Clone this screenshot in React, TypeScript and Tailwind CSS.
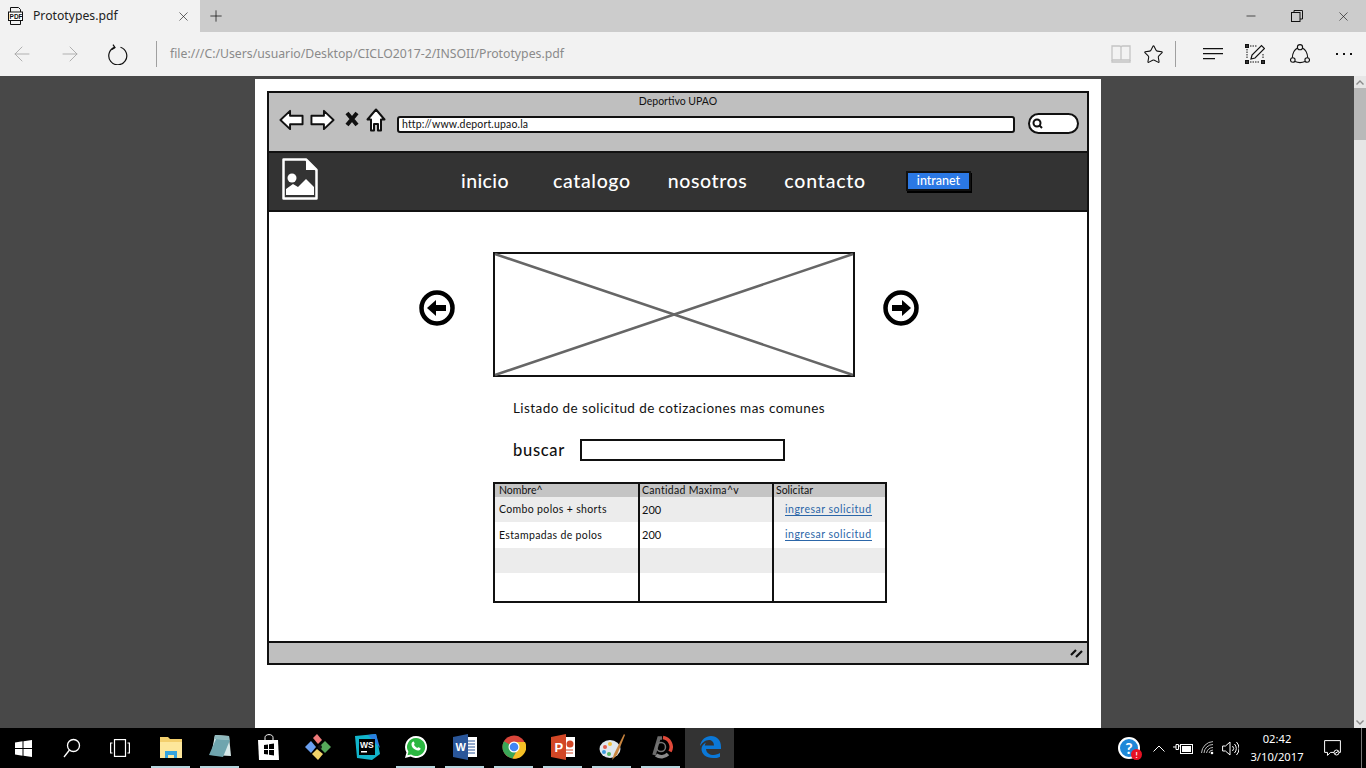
import { ArrowLeft, ArrowRight, X, Plus, Minus, Star } from 'lucide-react';
import type { ReactNode } from 'react';

const sketch = { fontFamily: 'Lato, "Liberation Sans", sans-serif' };
const ui = { fontFamily: '"Noto Sans", "Open Sans", sans-serif' };

function RestoreIcon() {
  return (
    <svg width="12" height="12" viewBox="0 0 12 12" fill="none" stroke="#111" strokeWidth="1">
      <rect x="0.5" y="2.5" width="8.5" height="9" />
      <path d="M3 2.5V.5h8.5V9H9" />
    </svg>
  );
}

function RefreshIcon() {
  return (
    <svg width="20" height="21" viewBox="0 0 20 21" fill="none" stroke="#111" strokeWidth="1.2">
      <path d="M12.5 3.2a9 9 0 1 1-6 .2" />
      <path d="M5 .6l2 3-3 2" />
    </svg>
  );
}

function ReadingIcon() {
  return (
    <svg width="20" height="18" viewBox="0 0 20 18" fill="none" stroke="#c4c4c4" strokeWidth="1.3">
      <path d="M1 1h7.5c.8 0 1.5.6 1.5 1.5V15H1zM19 1h-7.5c-.8 0-1.5.6-1.5 1.5V15h9z" />
      <path d="M1 15v2h18v-2" />
    </svg>
  );
}

function HubIcon() {
  return (
    <svg width="21" height="12" viewBox="0 0 21 12" fill="none" stroke="#111" strokeWidth="1.2">
      <path d="M0 .6h20M0 5.6h20M0 10.6h12" />
    </svg>
  );
}

function NoteIcon() {
  return (
    <svg width="20" height="20" viewBox="0 0 20 20" fill="none" stroke="#111">
      <rect x="0.5" y="0.5" width="3" height="3" fill="#333" />
      <rect x="0.5" y="16.5" width="3" height="3" fill="#333" />
      <rect x="16.5" y="16.5" width="3" height="3" fill="#333" />
      <path d="M5 2h7M2 5v10M5 18h10M18 10v5" strokeDasharray="1.5 1" />
      <path d="M6 15l1-4L16.5 1.5l3 3L10 14z" strokeWidth="1.2" />
    </svg>
  );
}

function ShareIcon() {
  return (
    <svg width="20" height="20" viewBox="0 0 20 20" fill="none" stroke="#111" strokeWidth="1.1">
      <circle cx="10" cy="3.2" r="2.6" />
      <circle cx="2.8" cy="16" r="2.3" />
      <circle cx="17.2" cy="16" r="2.3" />
      <path d="M7.6 4C4.5 5.5 2.6 9 2.3 13.7M12.4 4c3.1 1.5 5 5 5.3 9.7M5 17.5c3 1.3 7 1.3 10 0" />
    </svg>
  );
}

function PdfIcon() {
  return (
    <svg width="15" height="18" viewBox="0 0 15 18" fill="none" stroke="#111">
      <path d="M2.5 5V.5h8l2 2V5M2.5 14v3.5h10V14" />
      <rect x="0.5" y="5" width="14" height="8.5" fill="#fff" />
      <text x="1.6" y="11.8" fontSize="6.5" fontWeight="700" fill="#111" stroke="none" fontFamily="Liberation Sans">PDF</text>
    </svg>
  );
}

function BlockArrow({ dir }: { dir: 'left' | 'right' }) {
  return (
    <svg width="25" height="22" viewBox="0 0 26 22" fill="#fff" stroke="#111" strokeWidth="2" className="block">
      {dir === 'left' ? (
        <path d="M1.5 11L11.5 1.5V6.5H24.5V15.5H11.5V20.5Z" strokeLinejoin="round" />
      ) : (
        <path d="M24.5 11L14.5 1.5V6.5H1.5V15.5H14.5V20.5Z" strokeLinejoin="round" />
      )}
    </svg>
  );
}

function SketchHome() {
  return (
    <svg width="20" height="24" viewBox="0 0 20 24" fill="#fff" stroke="#111" strokeWidth="2" className="block">
      <path d="M10 1.5L1.5 11.5H5V22.5H8V16H12V22.5H15V11.5H18.5Z" strokeLinejoin="round" />
    </svg>
  );
}

function SketchX() {
  return (
    <svg width="14" height="16" viewBox="0 0 14 16" stroke="#111" strokeWidth="4" fill="none" className="block">
      <path d="M2 2l10 12M12 2L2 14" />
    </svg>
  );
}

function SketchLens() {
  return (
    <svg width="11" height="11" viewBox="0 0 11 11" fill="none" stroke="#111" strokeWidth="2">
      <circle cx="5" cy="5" r="3.5" />
      <path d="M7.5 7.5L10 10" />
    </svg>
  );
}

function ImageLogo() {
  return (
    <svg width="36" height="42" viewBox="0 0 36 42" fill="none">
      <path d="M1.5 1.5H24L34.5 12V40.5H1.5Z" stroke="#fff" strokeWidth="2.5" strokeLinejoin="round" />
      <path d="M24 2V12H34Z" fill="#fff" />
      <circle cx="10" cy="20" r="4.5" fill="#fff" />
      <path d="M4 37V31L11 26L16 29L24 21L32 29V37Z" fill="#fff" />
    </svg>
  );
}

function CircleArrow({ dir }: { dir: 'left' | 'right' }) {
  return (
    <svg width="36" height="36" viewBox="0 0 36 36" fill="none" className="block">
      <circle cx="18" cy="18" r="15.5" stroke="#000" strokeWidth="4.5" />
      {dir === 'left' ? (
        <path d="M8 18L17 10V15H27V21H17V26Z" fill="#000" />
      ) : (
        <path d="M28 18L19 10V15H9V21H19V26Z" fill="#000" />
      )}
    </svg>
  );
}

function Placeholder() {
  return (
    <svg width="362" height="125" viewBox="0 0 362 125" className="block">
      <rect x="1" y="1" width="360" height="123" fill="#fff" stroke="#111" strokeWidth="2" />
      <path d="M2 2L360 123M360 2L2 123" stroke="#666" strokeWidth="2.5" />
    </svg>
  );
}

function WinLogo() {
  return (
    <svg width="17" height="17" viewBox="0 0 17 17" fill="#fff">
      <path d="M0 2.5L7.5 1.3V8H0zM8.5 1.2L17 0V8H8.5zM0 9H7.5V15.7L0 14.5zM8.5 9H17V17L8.5 15.8z" />
    </svg>
  );
}

function SearchTask() {
  return (
    <svg width="18" height="20" viewBox="0 0 18 20" fill="none" stroke="#fff" strokeWidth="1.3">
      <circle cx="10.5" cy="7.5" r="6" />
      <path d="M6.5 12L1 19" />
    </svg>
  );
}

function TaskView() {
  return (
    <svg width="20" height="18" viewBox="0 0 20 18" fill="none" stroke="#fff" strokeWidth="1.2">
      <rect x="4.5" y="0.6" width="11" height="16.8" />
      <path d="M2.5 4H.6v10h1.9M17.5 4h1.9v10h-1.9" />
    </svg>
  );
}

function Explorer() {
  return (
    <svg width="22" height="22" viewBox="0 0 22 22">
      <path d="M0 1h8l2 2h12v19H0z" fill="#f3cf6d" />
      <path d="M0 6h22v16H0z" fill="#fde79b" />
      <path d="M5 22v-7h12v7h-3v-3H8v3z" fill="#35a4de" />
    </svg>
  );
}

function Notepad() {
  return (
    <svg width="24" height="26" viewBox="0 0 24 26">
      <path d="M7 1L21 2L23 22L3 21Z" fill="#d6e8e8" />
      <path d="M7 1L21 2L21.5 6L6 5Z" fill="#8fb9bd" />
      <path d="M1 21L8 5L22 6L15 23Z" fill="#6fa5ae" />
    </svg>
  );
}

function Store() {
  return (
    <svg width="22" height="27" viewBox="0 0 22 27">
      <path d="M7 6V3.5C7 1.5 9 .6 11 .6s4 .9 4 2.9V6" fill="none" stroke="#fff" />
      <path d="M0 6h20l1 20H1z" fill="#fff" />
      <path d="M6 11l4-.6V15H6zM11 10.3l5-.7V15h-5zM6 16h4v4.5l-4-.6zM11 16h5v5.4l-5-.7z" fill="#000" />
    </svg>
  );
}

function Kraken() {
  return (
    <svg width="26" height="28" viewBox="0 0 26 28">
      <path d="M8 5L12 1L17 7L13 11Z" fill="#ef7a7a" />
      <path d="M0 14L6 8L11 14L6 20Z" fill="#6a9ff0" />
      <path d="M14 14L20 8L26 14L20 20Z" fill="#56a85a" />
      <path d="M7 21L12 16L18 21L13 27Z" fill="#f1d36a" />
      <circle cx="15" cy="14" r="2" fill="#111" />
    </svg>
  );
}

function WebStorm() {
  return (
    <svg width="26" height="26" viewBox="0 0 26 26">
      <path d="M1 2L22 0L26 20L18 26L3 24Z" fill="#12b5cb" />
      <path d="M14 1L22 0L26 14Z" fill="#2a7fe0" />
      <rect x="5" y="5" width="16" height="16" fill="#000" />
      <text x="6" y="14" fill="#fff" fontSize="8.5" fontWeight="700" fontFamily="Liberation Sans">WS</text>
      <rect x="7" y="17" width="6" height="1.5" fill="#fff" />
    </svg>
  );
}

function WhatsApp() {
  return (
    <svg width="24" height="24" viewBox="0 0 24 24">
      <path d="M12 1a11 11 0 0 0-9.5 16.5L1 23l5.7-1.4A11 11 0 1 0 12 1z" fill="#fff" />
      <path d="M12 3a9 9 0 0 0-7.600 13.800l-.9 3.500 3.600-.9A9 9 0 1 0 12 3z" fill="#2bb741" />
      <path d="M8.500 7c1-1 1.500-.5 2 1 .3.800 0 1-.5 1.800.6 1.300 1.700 2.400 3.200 3.200.8-.6 1.100-1 1.900-.6 1.500.7 2 1 1.200 2-1 1.400-3 1.300-5.300 0C8 13 6.300 9 8.500 7z" fill="#fff" />
    </svg>
  );
}

function Word() {
  return (
    <svg width="24" height="26" viewBox="0 0 24 26">
      <path d="M14 3h10v20H14z" fill="#fff" />
      <path d="M15 7h7M15 10h7M15 13h7M15 16h7M15 19h7" stroke="#2a5699" />
      <path d="M0 3L15 0V26L0 23Z" fill="#2a5699" />
      <text x="2.5" y="17" fill="#fff" fontSize="11" fontWeight="700" fontFamily="Liberation Sans">W</text>
    </svg>
  );
}

function Chrome() {
  return (
    <svg width="24" height="24" viewBox="0 0 24 24">
      <circle cx="12" cy="12" r="11.5" fill="#d9453a" />
      <path d="M12 12L2 6.2A11.5 11.5 0 0 0 10.5 23.4L17 12z" fill="#3aa757" />
      <path d="M12 7H23A11.5 11.5 0 0 1 10.5 23.4L17 12z" fill="#f6c026" />
      <circle cx="12" cy="12" r="5.5" fill="#fff" />
      <circle cx="12" cy="12" r="4.3" fill="#4285f4" />
    </svg>
  );
}

function PowerPoint() {
  return (
    <svg width="24" height="26" viewBox="0 0 24 26">
      <path d="M14 3h10v20H14z" fill="#fff" />
      <circle cx="19" cy="10" r="3.5" fill="#d24726" />
      <path d="M15 16h7M15 19h7" stroke="#d24726" />
      <path d="M0 3L15 0V26L0 23Z" fill="#d24726" />
      <text x="3.5" y="18" fill="#fff" fontSize="13" fontWeight="700" fontFamily="Liberation Sans">P</text>
    </svg>
  );
}

function Paint() {
  return (
    <svg width="26" height="28" viewBox="0 0 26 28">
      <ellipse cx="11" cy="16" rx="10.5" ry="9" fill="#dfe7ee" />
      <circle cx="6" cy="14" r="2" fill="#e25b4b" />
      <circle cx="11" cy="11" r="2" fill="#f3c13a" />
      <circle cx="5" cy="19" r="2" fill="#3d9be0" />
      <circle cx="10" cy="21" r="2" fill="#52b464" />
      <path d="M25 1L15 21L13 27L18 22L26 2Z" fill="#c9853f" />
    </svg>
  );
}

function Pinned() {
  return (
    <svg width="24" height="24" viewBox="0 0 24 24" fill="none">
      <path d="M14 2.5a9.5 9.5 0 0 1 7 14" stroke="#e0493a" strokeWidth="3.5" />
      <path d="M19 19a9.5 9.5 0 0 1-12 1" stroke="#8b8b8b" strokeWidth="3.5" />
      <path d="M5 20L10 3h3" stroke="#6b6b6b" strokeWidth="3.5" />
      <circle cx="12" cy="12" r="4.5" stroke="#777" strokeWidth="1.5" />
    </svg>
  );
}

function Edge() {
  return (
    <svg width="22" height="22" viewBox="0 0 22 22">
      <path d="M1 10C2 3.5 7 0 12 0c6 0 10 4 10 11v2H7c.4 4 3.8 6 7.5 6 2.5 0 4.8-.8 6.5-1.9v3.6C19 22 16.5 22 14 22 7 22 2.5 18 2.5 13c0-2.8 1.8-5 4.5-6.5-.7 1-1 2-1.200 3H15c0-3-1.800-5.500-5-5.500C6 4 3 7 1 10z" fill="#0b78d7" />
    </svg>
  );
}

function HelpBadge() {
  return (
    <span className="relative flex h-[22px] w-[22px] items-center justify-center rounded-full border-2 border-white bg-[#1e88d8] text-[16px] font-bold leading-none text-white" style={sketch}>
      ?
      <span className="absolute -bottom-[3px] -right-[4px] flex h-[11px] w-[11px] items-center justify-center rounded-full bg-[#e81123] text-[8px] font-bold text-white">!</span>
    </span>
  );
}

function Battery() {
  return (
    <svg width="20" height="14" viewBox="0 0 20 14" fill="none" stroke="#fff">
      <path d="M0 6h3M3 3.5h2.5v5H3zM5.5 5H7" />
      <rect x="7.5" y="3.5" width="12" height="9" />
      <rect x="9" y="5" width="9" height="6" fill="#fff" stroke="none" />
    </svg>
  );
}

function Wifi() {
  return (
    <svg width="14" height="14" viewBox="0 0 14 14" fill="none" stroke="#bbb">
      <path d="M.5 12A12 12 0 0 1 12 .6M3 12a9 9 0 0 1 9-8.5M5.5 12A6.5 6.5 0 0 1 12 6.5M8 12a4 4 0 0 1 4-3" />
      <circle cx="11" cy="12" r="1.3" fill="#fff" stroke="none" />
    </svg>
  );
}

function Speaker() {
  return (
    <svg width="17" height="15" viewBox="0 0 17 15" fill="none" stroke="#fff">
      <path d="M.6 5h2.9L8 1v13L3.5 10H.6z" />
      <path d="M10.5 5a3.5 3.5 0 0 1 0 5M12.5 3a6.5 6.5 0 0 1 0 9M14.5 1a9.5 9.5 0 0 1 0 13" />
    </svg>
  );
}

function Notif() {
  return (
    <svg width="17" height="16" viewBox="0 0 17 16" fill="none" stroke="#fff">
      <path d="M.6.6h15.8v11.8H6.5l-3 3v-3H.6z" />
      <circle cx="12.5" cy="12.5" r="2.5" fill="#000" />
      <path d="M11 13.5l3-2" />
    </svg>
  );
}

function AppSlot({ children, on, active }: { children: ReactNode; on?: boolean; active?: boolean }) {
  return (
    <div className={`flex h-10 w-[49px] flex-col ${active ? 'bg-[#333333]' : ''}`}>
      <div className="flex flex-1 items-center justify-center">{children}</div>
      <div className={`mx-[5px] h-[2px] ${on ? 'bg-[#b5d5dd]' : 'bg-transparent'}`} />
    </div>
  );
}

const rows = [
  { name: 'Combo polos + shorts', qty: '200', link: 'ingresar solicitud', bg: 'bg-[#ececec]', h: 'h-[25px]' },
  { name: 'Estampadas de polos', qty: '200', link: 'ingresar solicitud', bg: 'bg-white', h: 'h-[26px]' },
  { name: '', qty: '', link: '', bg: 'bg-[#ececec]', h: 'h-[25px]' },
  { name: '', qty: '', link: '', bg: 'bg-white', h: 'h-[28px]' },
];

export default function App() {
  return (
    <div className="flex h-[768px] w-[1366px] flex-col overflow-hidden bg-[#484848]" style={ui}>
      {/* tab strip */}
      <div className="flex h-8 shrink-0 items-center bg-[#cccccc]">
        <div className="flex h-8 w-[200px] items-center bg-[#f2f2f2] pl-2">
          <PdfIcon />
          <span className="ml-[10px] text-[12.2px] text-[#222]">Prototypes.pdf</span>
          <X size={15} strokeWidth={1} className="ml-auto mr-[9px] text-[#111]" />
        </div>
        <Plus size={18} strokeWidth={1} className="ml-[7px] text-[#111]" />
        <div className="ml-auto flex items-center">
          <div className="flex w-[46px] justify-center"><Minus size={14} strokeWidth={1.2} className="text-[#111]" /></div>
          <div className="flex w-[46px] justify-center"><RestoreIcon /></div>
          <div className="flex w-[46px] justify-center"><X size={15} strokeWidth={1} className="text-[#111]" /></div>
        </div>
      </div>

      {/* address bar */}
      <div className="flex h-11 shrink-0 items-center bg-[#f2f2f2]">
        <div className="-ml-[2px] flex w-12 justify-center"><ArrowLeft size={24} strokeWidth={0.9} className="text-[#a8a8a8]" /></div>
        <div className="flex w-12 justify-center"><ArrowRight size={24} strokeWidth={0.9} className="text-[#a8a8a8]" /></div>
        <div className="flex w-12 justify-center"><RefreshIcon /></div>
        <div className="ml-[14px] h-[26px] w-px bg-[#a0a0a0]" />
        <span className="ml-[13px] text-[12.25px] text-[#8a8a8a]">file:///C:/Users/usuario/Desktop/CICLO2017-2/INSOII/Prototypes.pdf</span>
        <div className="ml-auto flex items-center">
          <ReadingIcon />
          <Star size={21} strokeWidth={1.2} className="ml-[12px] text-[#111]" />
          <div className="ml-[11px] h-[26px] w-px bg-[#a0a0a0]" />
          <div className="ml-[27px]"><HubIcon /></div>
          <div className="ml-[21px]"><NoteIcon /></div>
          <div className="ml-[25px]"><ShareIcon /></div>
          <div className="ml-[26px] mr-[14px] flex gap-[5px]">
            <span className="h-[2px] w-[2px] bg-[#111]" />
            <span className="h-[2px] w-[2px] bg-[#111]" />
            <span className="h-[2px] w-[2px] bg-[#111]" />
          </div>
        </div>
      </div>

      {/* pdf viewer */}
      <div className="flex min-h-0 flex-1">
        <div className="ml-[255px] mt-[3px] w-[846px] bg-white px-3 pt-3">
          <div className="flex h-[574px] w-[822px] flex-col border-2 border-[#111]" style={sketch}>
            <div className="h-[58px] shrink-0 bg-[#bfbfbf]">
              <div className="pt-[1px] text-center text-[10.5px] leading-[14px] text-[#111]">Deportivo UPAO</div>
              <div className="mt-[1px] flex items-start pl-[10px]">
                <BlockArrow dir="left" />
                <div className="ml-[6px]"><BlockArrow dir="right" /></div>
                <div className="ml-[10px] mt-[2px]"><SketchX /></div>
                <div className="ml-[7px] -mt-[1px]"><SketchHome /></div>
                <div className="ml-[11px] mt-[7px] flex h-[17px] w-[618px] items-center rounded-[3px] border-2 border-[#111] bg-white pl-[3px] text-[10.5px] tracking-[0.15px] text-[#111]">
                  http://www.deport.upao.la
                </div>
                <div className="ml-[13px] mt-[4px] flex h-[21px] w-[51px] items-center rounded-full border-2 border-[#111] bg-white pl-[2px]">
                  <SketchLens />
                </div>
              </div>
            </div>
            <div className="flex h-[61px] shrink-0 items-center border-y-2 border-[#111] bg-[#333333] pb-[2px] pl-[13px]">
              <div className="mb-[3px]"><ImageLogo /></div>
              <span className="ml-[143px] text-[19.5px] font-medium tracking-[0.4px] text-white">inicio</span>
              <span className="ml-[44px] text-[19.5px] font-medium tracking-[0.65px] text-white">catalogo</span>
              <span className="ml-[37px] text-[19.5px] font-medium tracking-[0.6px] text-white">nosotros</span>
              <span className="ml-[37px] text-[19.5px] font-medium tracking-[0.8px] text-white">contacto</span>
              <span className="ml-[40px] mt-[1px] flex h-[20px] w-[65px] items-center justify-center border-2 border-[#111] bg-[#2b78e4] text-[12.5px] font-medium text-white shadow-[1px_2px_0_#000]">intranet</span>
            </div>

            <div className="flex min-h-0 flex-1 flex-col bg-white pt-[40px]">
              <div className="flex items-start pl-[150px]">
                <div className="mt-[38px]"><CircleArrow dir="left" /></div>
                <div className="ml-[38px]"><Placeholder /></div>
                <div className="ml-[28px] mt-[38px]"><CircleArrow dir="right" /></div>
              </div>
              <div className="ml-[244px] mt-[22px] text-[13.5px] leading-[18px] tracking-[0.42px] text-[#111]">
                Listado de solicitud de cotizaciones mas comunes
              </div>
              <div className="ml-[244px] mt-[21px] flex items-center">
                <span className="text-[16.5px] font-medium tracking-[0.7px] text-[#111]">buscar</span>
                <div className="ml-[15px] h-[22px] w-[205px] border-2 border-[#111] bg-white" />
              </div>
              <div className="ml-[224px] mt-[19px] w-[394px] border-2 border-[#111] text-[10.5px] text-[#111]">
                <div className="grid h-[13px] grid-cols-[145px_134px_1fr] items-center bg-[#c4c4c4] leading-none">
                  <span className="border-r-2 border-[#111] pl-[4px] leading-[13px]">Nombre^</span>
                  <span className="border-r-2 border-[#111] pl-[2px] leading-[13px] tracking-[0.3px]">Cantidad Maxima^v</span>
                  <span className="pl-[2px]">Solicitar</span>
                </div>
                {rows.map((r, i) => (
                  <div key={i} className={`grid grid-cols-[145px_134px_1fr] ${r.bg} ${r.h}`}>
                    <span className="flex items-center border-r-2 border-[#111] pl-[4px] pt-[2px] tracking-[0.35px]">{r.name}</span>
                    <span className="flex items-center border-r-2 border-[#111] pl-[2px] pt-[1px] text-[11px]">{r.qty}</span>
                    <span className="flex items-center pl-[11px]">
                      {r.link && <span className="border-b border-[#2b66a8] leading-[12px] tracking-[0.5px] text-[#2b66a8]">{r.link}</span>}
                    </span>
                  </div>
                ))}
              </div>
            </div>

            <div className="flex h-[22px] shrink-0 items-center justify-end border-t-2 border-[#111] bg-[#bfbfbf] pr-[3px]">
              <svg width="14" height="10" viewBox="0 0 14 10" stroke="#111" strokeWidth="2.2">
                <path d="M1 7L6 2M6 9L12 3" />
              </svg>
            </div>
          </div>
        </div>
        {/* scrollbar */}
        <div className="ml-[253px] flex w-3 flex-col bg-[#e6e6e6]">
          <div className="flex h-3 items-center justify-center">
            <svg width="8" height="5" viewBox="0 0 8 5" fill="none" stroke="#8a8a8a" strokeWidth="1.4"><path d="M.5 4.5L4 1l3.5 3.5" /></svg>
          </div>
          <div className="h-[52px] bg-[#b9b9b9]" />
          <div className="mt-auto flex h-3 items-center justify-center">
            <svg width="8" height="5" viewBox="0 0 8 5" fill="none" stroke="#8a8a8a" strokeWidth="1.4"><path d="M.5.5L4 4l3.5-3.5" /></svg>
          </div>
        </div>
      </div>

      {/* taskbar */}
      <div className="flex h-10 shrink-0 items-center bg-black">
        <div className="flex h-10 w-[47px] items-center justify-center"><WinLogo /></div>
        <div className="flex h-10 w-[49px] items-center justify-center"><SearchTask /></div>
        <div className="flex h-10 w-[48px] items-center justify-center"><TaskView /></div>
        <div className="ml-[2px] flex">
          <AppSlot on><Explorer /></AppSlot>
          <AppSlot on><Notepad /></AppSlot>
          <AppSlot><Store /></AppSlot>
          <AppSlot><Kraken /></AppSlot>
          <AppSlot><WebStorm /></AppSlot>
          <AppSlot on><WhatsApp /></AppSlot>
          <AppSlot on><Word /></AppSlot>
          <AppSlot on><Chrome /></AppSlot>
          <AppSlot on><PowerPoint /></AppSlot>
          <AppSlot on><Paint /></AppSlot>
          <AppSlot on><Pinned /></AppSlot>
          <AppSlot active><Edge /></AppSlot>
        </div>
        <div className="ml-auto flex items-center text-white">
          <HelpBadge />
          <svg width="12" height="7" viewBox="0 0 12 7" fill="none" stroke="#fff" className="ml-[13px]"><path d="M.5 6.5L6 1l5.5 5.5" /></svg>
          <div className="ml-[8px]"><Battery /></div>
          <div className="ml-[8px]"><Wifi /></div>
          <div className="ml-[7px]"><Speaker /></div>
          <div className="ml-[8px] flex w-[60px] flex-col items-center text-[11.2px] leading-[18px]">
            <span>02:42</span>
            <span>3/10/2017</span>
          </div>
          <div className="ml-[17px] mr-[20px]"><Notif /></div>
          <div className="mr-[4px] h-10 w-px bg-[#777777]" />
        </div>
      </div>
    </div>
  );
}
